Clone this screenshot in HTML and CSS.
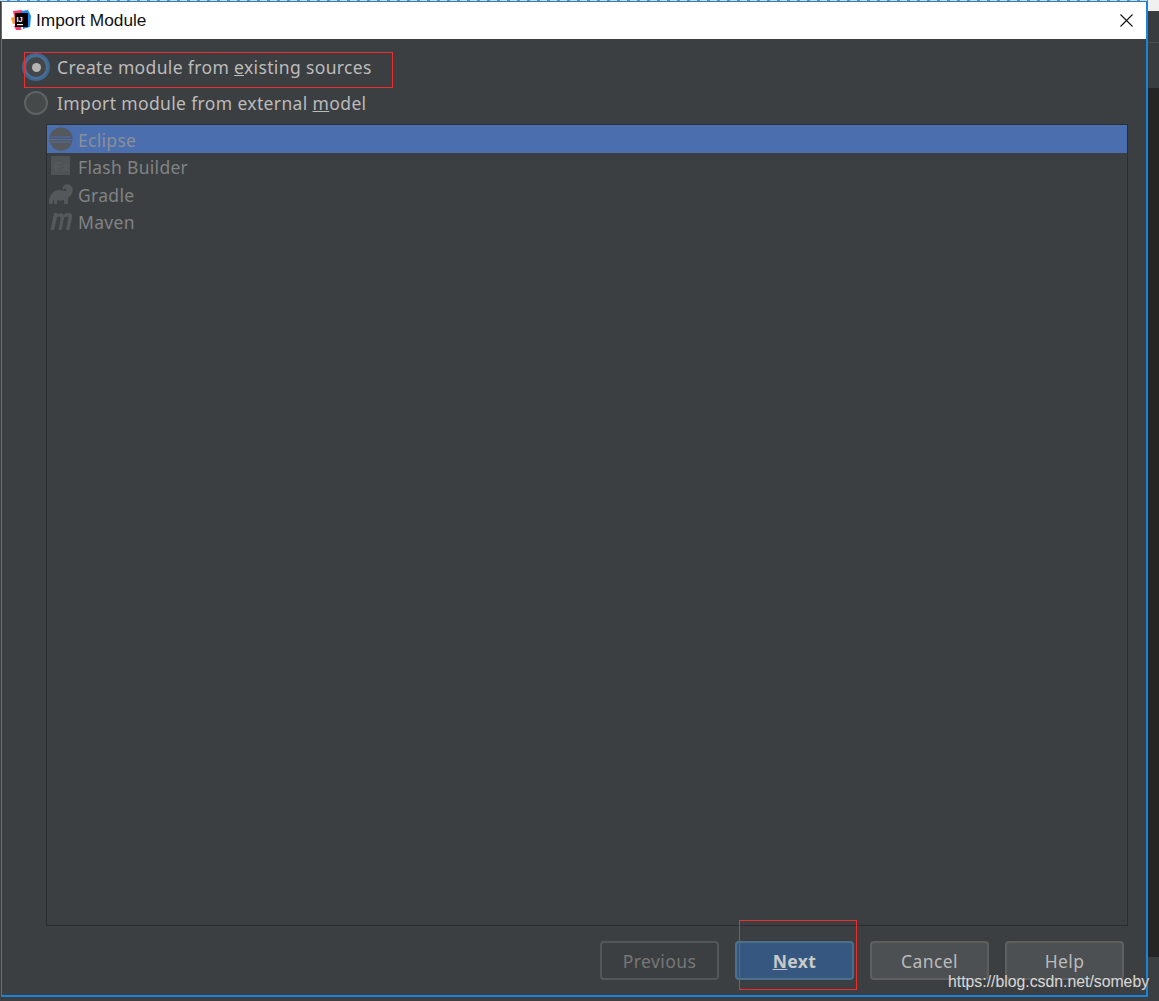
FILE: index.html
```html
<!DOCTYPE html>
<html lang="en">
<head>
<meta charset="utf-8">
<title>Import Module</title>
<link rel="stylesheet" href="styles.css">
</head>
<body>
<div class="desktop">
  <div class="backdrop-top"></div>
  <div class="backdrop-right"><div class="br-a"></div><div class="br-b"></div><div class="br-c"></div></div>
  <section class="window">
    <header class="titlebar">
      <svg class="app-icon" viewBox="0 0 20 20" width="20" height="20">
        <path d="M2 1 L11 0 L11 10 L4 10 Z" fill="#fc3a6e"/>
        <path d="M0 8 L5 6 L6 14 L2 14 Z" fill="#ff9a2e"/>
        <path d="M10 1 L17 0 L20 6 L19 17 L12 19 Z" fill="#1e88f0"/>
        <path d="M3 16 L10 14 L10 20 L5 20 Z" fill="#fc3a6e"/>
        <rect x="4" y="3" width="13" height="14" fill="#000"/>
        <rect x="6" y="14" width="6" height="1.2" fill="#fff"/>
        <text x="5.4" y="11.6" class="icon-text">IJ</text>
      </svg>
      <span class="title">Import Module</span>
      <svg class="close" viewBox="0 0 13 13" width="13" height="13"><path d="M.5.5l12 12M12.5.5l-12 12" stroke="#111" stroke-width="1.1" fill="none"/></svg>
    </header>
    <main class="content">
      <div class="options">
        <label class="option">
          <span class="radio radio-on"></span>
          <span>Create module from <u>e</u>xisting sources</span>
        </label>
        <label class="option">
          <span class="radio"></span>
          <span>Import module from external <u>m</u>odel</span>
        </label>
      </div>
      <div class="list">
        <div class="row row-selected">
          <svg class="row-icon" viewBox="0 0 24 24" width="24" height="24">
            <circle cx="12" cy="12" r="11.500" fill="#55585c"/>
            <path d="M2 10h20M1 12.500h22M2 15h20" stroke="#4a6cad" stroke-width="1"/>
          </svg>
          <span>Eclipse</span>
        </div>
        <div class="row">
          <svg class="row-icon" viewBox="0 0 24 24" width="24" height="24">
            <rect x="2" y="2" width="19" height="19" fill="#505356"/>
            <text x="5" y="17" class="fx">Fx</text>
          </svg>
          <span>Flash Builder</span>
        </div>
        <div class="row">
          <svg class="row-icon" viewBox="0 0 24 24" width="24" height="24">
            <path d="M0 22 C0 13 4 8 10 8 C13 8 15 9 16 9 C17 9 18 7 17 6.500 C16 6 15 7 15 8 L13.500 6.500 C14 3 17 1.500 20 2.500 C23 3.500 25 7 23 11 C22 14 20 15 19 16 L19 22 L15 22 L15 18 C12 19 10 19 8 18 L8 22 L5 22 L5 18 C4 18 3.500 20 3.500 22 Z" fill="#55585b"/>
          </svg>
          <span>Gradle</span>
        </div>
        <div class="row">
          <svg class="row-icon" viewBox="0 0 24 24" width="24" height="24">
            <path d="M1.500 21 L5 4 L8.500 4 L8.200 6 C10 3.500 14 3.500 14.800 6 C16.500 3.500 20 3 22 4.500 C23.500 6 23 8 22.800 9.500 L20.500 21 L17 21 L19.300 9 C19.500 7 16.500 7 15 9 L12.800 21 L9.400 21 L11.600 9 C12 7 9 7 7.800 9 L5.200 21 Z" fill="#55585b"/>
          </svg>
          <span>Maven</span>
        </div>
      </div>
      <footer class="actions">
        <button class="btn btn-disabled" type="button">Previous</button>
        <button class="btn btn-primary" type="button"><u>N</u>ext</button>
        <button class="btn" type="button">Cancel</button>
        <button class="btn" type="button">Help</button>
      </footer>
    </main>
  </section>
  <div class="mark mark-options"></div>
  <div class="mark mark-next"></div>
  <div class="watermark">https://blog.csdn.net/someby</div>
</div>
</body>
</html>
```

FILE: styles.css
```css
* { box-sizing: border-box; }
html, body { margin: 0; height: 100%; }
body { background: #3c3f41; overflow: hidden; }

.desktop { position: relative; width: 1159px; height: 1001px; overflow: hidden; }

.backdrop-top {
  position: absolute; left: 0; top: 0; width: 1159px; height: 1px;
  background: repeating-linear-gradient(90deg, #d8d8d8 0 7px, #8a8a8a 7px 10px);
}
.backdrop-right {
  position: absolute; left: 1148px; top: 0; width: 11px; height: 1001px;
  display: flex; flex-direction: column; background: #f0f0f0; padding-top: 11px;
}
.br-a { height: 77px; background: #3a3d3f; box-shadow: inset 0 31px 0 #393c3e, inset 0 32px 0 #4a4c4e; }
.br-b { height: 869px; background: #252525; }
.br-c { flex: 1; background: #3c3f41; }

.window {
  position: absolute; left: 1px; top: 1px; width: 1147px; height: 996px;
  display: flex; flex-direction: column;
  border: 1px solid #1a84d8; border-width: 1px 2px 2px 1px;
  background: #3c3f41;
}

.titlebar {
  flex: 0 0 37px; display: flex; align-items: center;
  background: #fff; padding: 0 13px 0 9px;
}
.app-icon { flex: none; margin: -2px 5px 0 0; }
.icon-text { font: 700 7.500px "Liberation Sans", sans-serif; fill: #fff; }
.title { font: 17.300px "Liberation Sans", sans-serif; color: #111; flex: 1; }
.close { flex: none; margin-top: -1px; }

.content {
  flex: 1; min-height: 0; display: flex; flex-direction: column;
  font-family: "Noto Sans", sans-serif; font-size: 17.500px; color: #bbbbbb;
}

.options { display: flex; flex-direction: column; gap: 12px; padding: 16px 0 0 22px; }
.option { display: flex; align-items: center; gap: 9px; height: 24px; letter-spacing: .36px; }
.radio {
  flex: none; width: 24px; height: 24px; border-radius: 50%;
  background: #45494a; border: 2px solid #5f6263;
  display: flex; align-items: center; justify-content: center;
}
.radio-on { background: #43474a; border-color: #4a6d93; box-shadow: 0 0 0 2px #3f6690; }
.radio-on::after { content: ""; width: 9px; height: 9px; border-radius: 50%; background: #b4b4b4; }

.list {
  margin: 9px 18px 0 44px; flex: 1; min-height: 0;
  border: 1px solid #2c2d2e; background: #3c3f41;
  letter-spacing: .3px; color: #808385;
}
.row { height: 27.500px; display: flex; align-items: center; gap: 5px; padding-left: 2px; }
.row span { padding-top: 2px; }
.row-selected { background: #4b6eaf; color: #8b8f96; }
.row-icon { flex: none; }
.fx { font: 700 13px "Liberation Sans", sans-serif; fill: #56595c; }

.actions { flex: 0 0 69px; display: flex; gap: 16px; justify-content: flex-end; padding: 15px 22px 15px 0; }
.btn {
  width: 119px; height: 39px; border-radius: 4px;
  border: 2px solid #5e6060; background: #4c5052; color: #bbbbbb;
  font: inherit; letter-spacing: .4px; padding: 1px 0 0;
}
.btn-disabled { background: #3c3f41; border-color: #54575a; color: #777; }
.btn-primary { background: #365880; border-color: #4c708c; color: #c9c9c9; font-weight: 700; }

.mark { position: absolute; border: 1px solid #ee2e2e; pointer-events: none; }
.mark-options { left: 24px; top: 52px; width: 369px; height: 36px; }
.mark-next { left: 739px; top: 920px; width: 118px; height: 70px; }

.watermark {
  position: absolute; left: 948px; top: 973px;
  font: 15.800px/18px "Liberation Sans", sans-serif; color: #d6d6d6;
  text-shadow: 0 0 2px #555;
}
```
